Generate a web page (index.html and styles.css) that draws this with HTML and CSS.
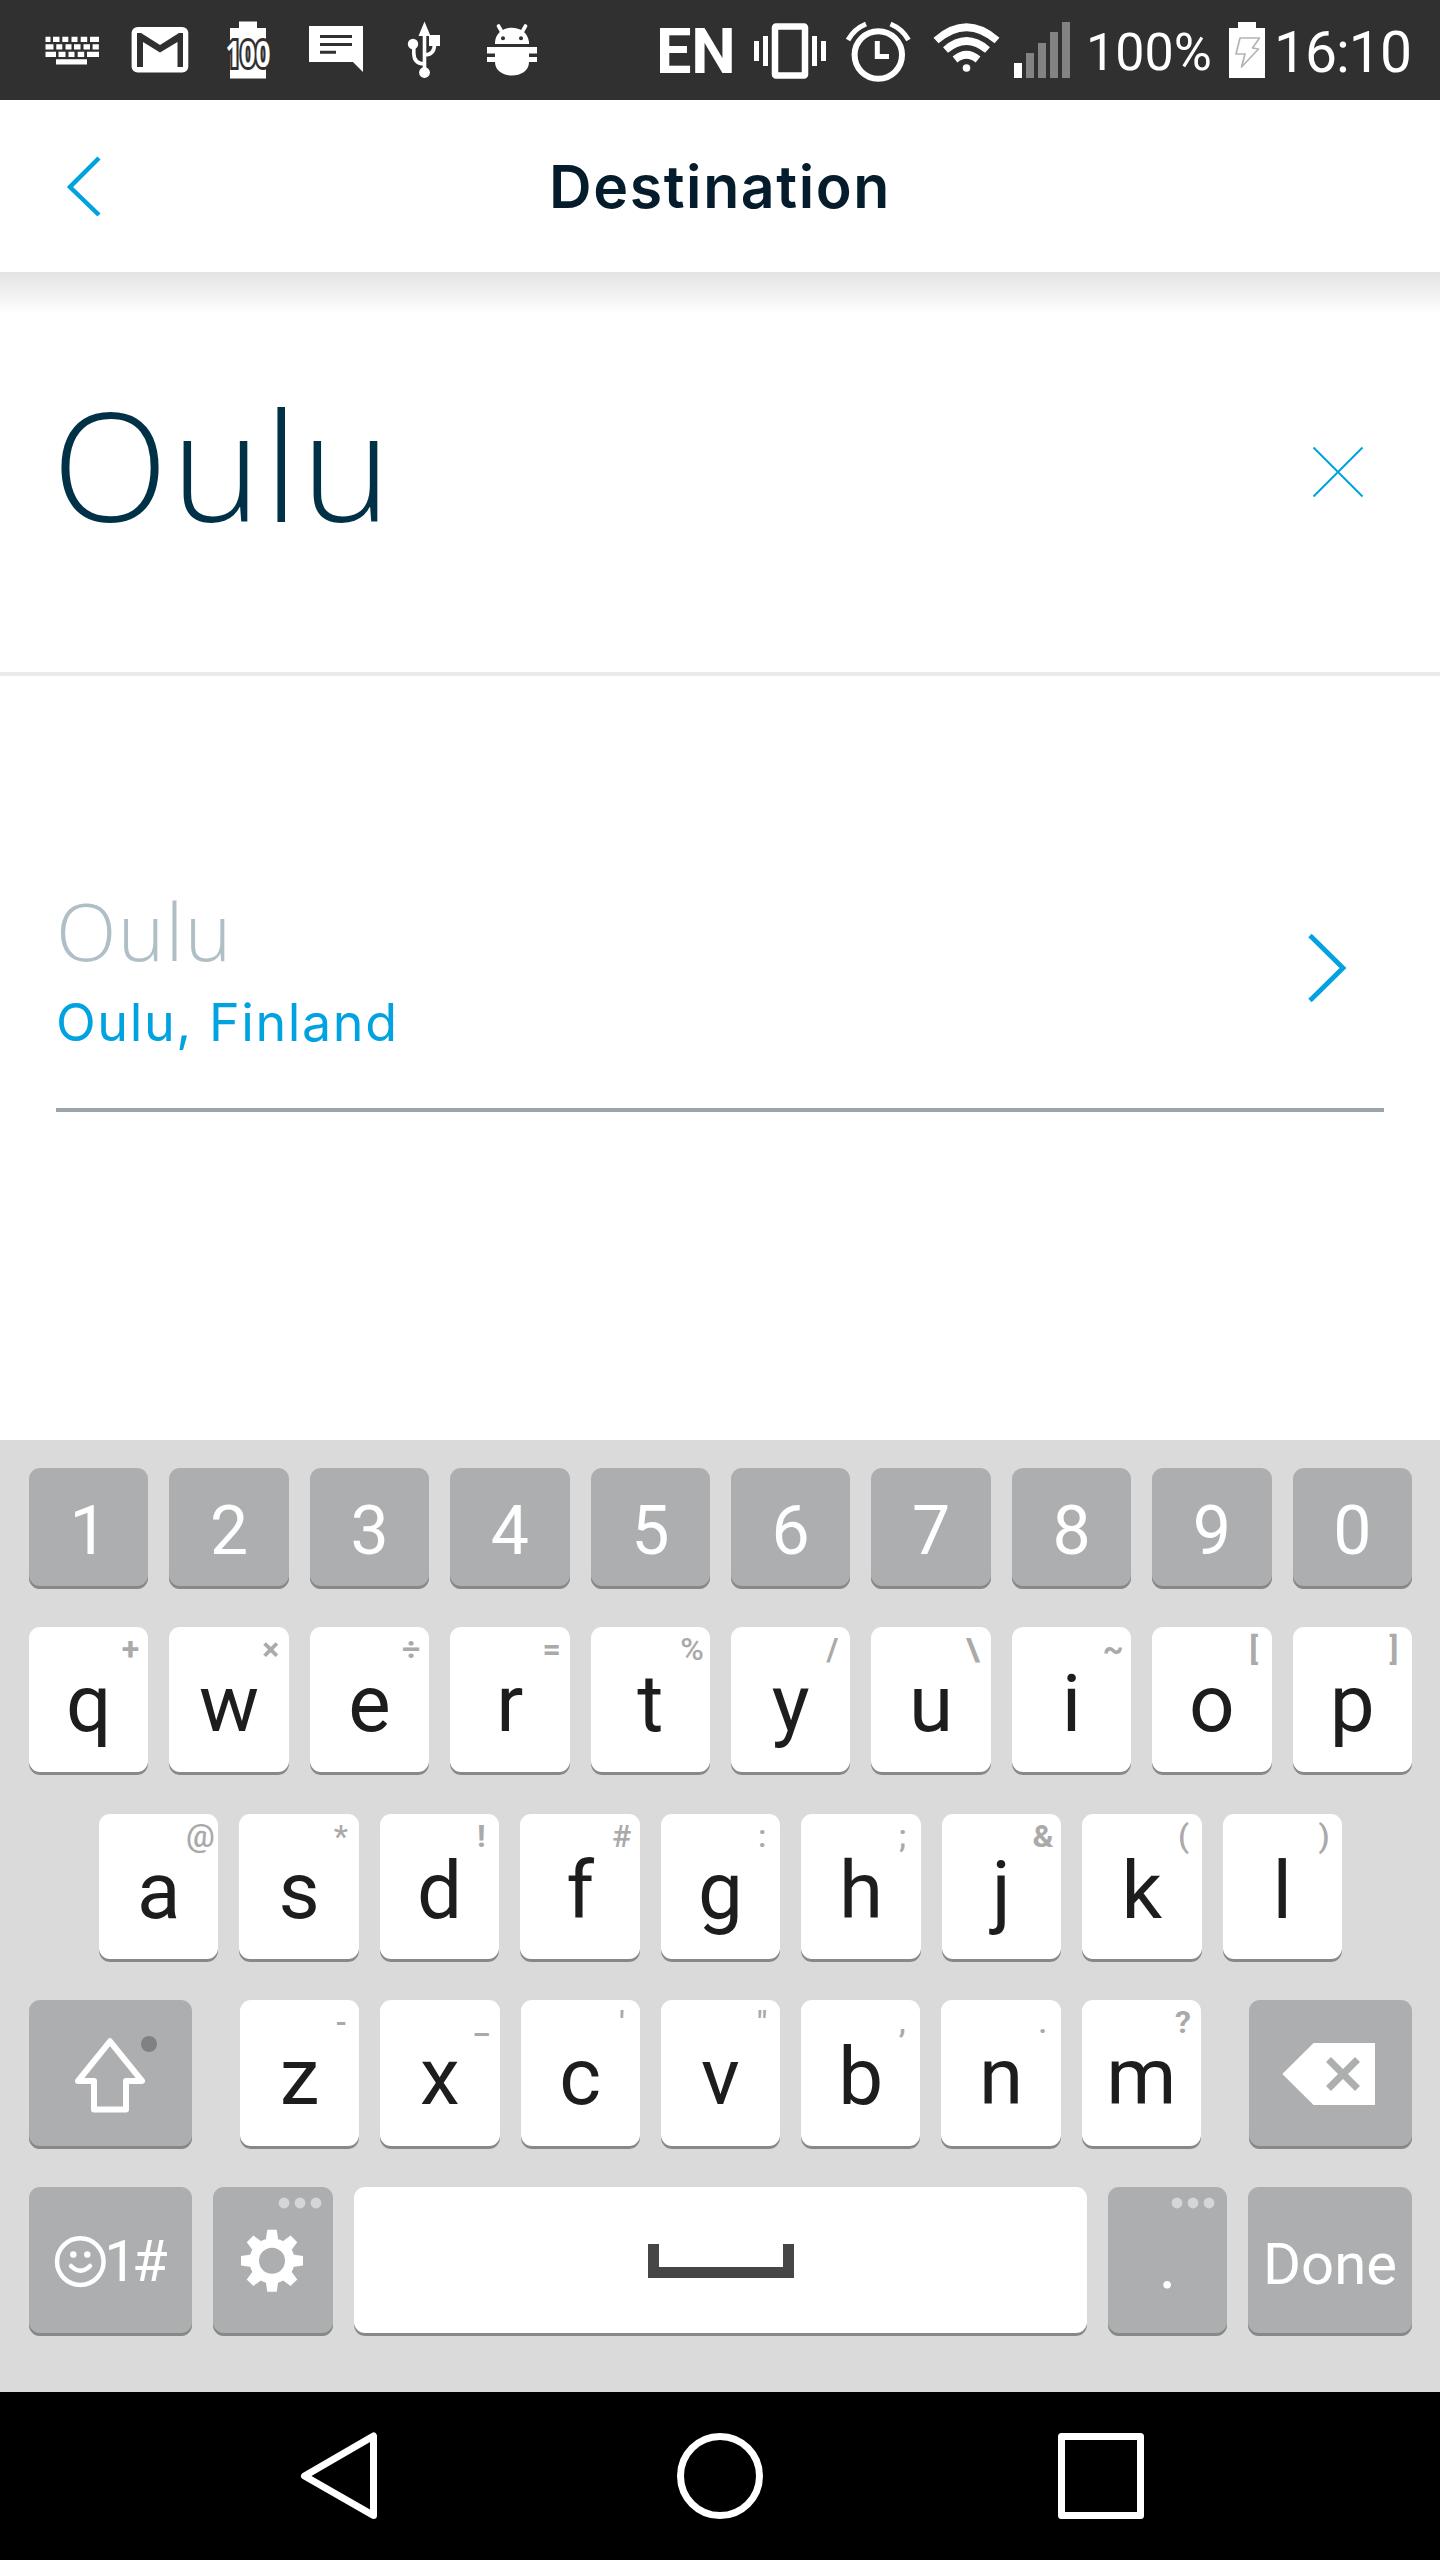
FILE: index.html
```
<!DOCTYPE html>
<html lang="en">
<head>
<meta charset="utf-8">
<title>Destination</title>
<link rel="stylesheet" href="styles.css">
</head>
<body>
<div class="screen">
  <div class="status">
    <div class="status-group status-left">
      <svg width="80" height="100" viewBox="40 0 80 100"><path fill="#fff" d="M45.5 36.7h5v5.2h-5zM53 36.7h6.5v5.2H53zM62.3 36.7h6v5.2h-6zM71.5 36.7h6v5.2h-6zM80.7 36.7h6.5v5.2h-6.5zM90 36.7h9v5.2h-9zM45.5 44.2h8v5.2h-8zM56.3 44.2h6v5.2h-6zM65.5 44.2h6v5.2h-6zM74 44.2h6.5v5.2H74zM83.5 44.2H90v5.2h-6.5zM92.6 44.2h6.2v5.2h-6.2zM45.5 51.8H56V57H45.5zM58.5 51.8h7V57h-7zM68.5 51.8h6V57h-6zM77.7 51.8h6.5V57h-6.5zM87 51.8h12V57H87zM56 59.2h31v5.2H56z"/></svg>
      <svg width="90" height="100" viewBox="120 0 90 100"><rect x="131.6" y="27" width="56.7" height="45.6" rx="6" fill="#fff"/><path fill="#303030" d="M137 33h4l19 12 19-12h4v34h-5.500V42L160 52.500 143 42v25h-6z"/></svg>
      <svg width="90" height="100" viewBox="210 0 90 100"><path fill="#fff" d="M239 21.500h18v6.500h9v50.500h-36V28h9z"/><text class="battery-level" x="248" y="67" text-anchor="middle" textLength="45" lengthAdjust="spacingAndGlyphs">100</text></svg>
      <svg width="90" height="100" viewBox="300 0 90 100"><path fill="#fff" d="M309 26h54v46l-10-10h-44z"/><path stroke="#303030" stroke-width="3" d="M320 36.500h32M320 44.500h32M320 52.200h16"/></svg>
      <svg width="80" height="100" viewBox="390 0 80 100"><g fill="#fff"><path d="m424.500 21.500 6 14.500h-12zM429 35h11v11h-11z"/><circle cx="413" cy="44" r="5.200"/><circle cx="424.500" cy="72.500" r="5.400"/></g><path fill="none" stroke="#fff" stroke-width="3.600" d="M424.500 34v38M413.800 47v6q0 11 10.700 11M434.500 44q0 11-10 11"/></svg>
      <svg width="90" height="100" viewBox="470 0 90 100"><path fill="#fff" d="M495 44v-2c2-19 32-19 34 0v2zM487 47h50v6.500h-8V57h8v5h-8c0 18-34 18-34 0h-8v-5h8v-3.500h-8z"/><path stroke="#fff" stroke-width="3.600" stroke-linecap="round" d="m498.500 26 4 7m23-7-4 7"/><circle cx="503" cy="38.300" r="2" fill="#303030"/><circle cx="521" cy="38.300" r="2" fill="#303030"/></svg>
    </div>
    <div class="status-group">
      <span class="locale">EN</span>
      <svg width="85" height="100" viewBox="750 0 85 100"><path fill="#fff" d="M754 41h5v20h-5zM763 36h5v30h-5zM812 36h5v30h-5zM821 41h5v20h-5z"/><rect x="775" y="26.500" width="30" height="49" rx="1" fill="none" stroke="#fff" stroke-width="6.500"/></svg>
      <svg width="85" height="100" viewBox="835 0 85 100"><g fill="none" stroke="#fff"><circle cx="878.300" cy="55" r="23.700" stroke-width="6"/><path stroke-width="5" d="M877.300 41v15.500H889M848 40q6-11 18-16M908.500 40q-6-11-18-16"/></g></svg>
      <svg width="90" height="100" viewBox="920 0 90 100"><g fill="none" stroke="#fff" stroke-width="7.500"><path d="M936 40.500q30.500-26.500 61 0M945.500 50q21-18 42 0M955 59.500q11.500-9.500 23 0"/></g><circle cx="966.500" cy="68" r="3.800" fill="#fff"/></svg>
      <svg width="70" height="100" viewBox="1010 0 70 100"><path fill="#fff" d="M1014 63h8v15h-8z"/><path fill="#838383" d="M1026 53h8v25h-8zM1038 43h8v35h-8zM1050 32h8v46h-8zM1062 22h8v56h-8z"/></svg>
      <span class="percent">100%</span>
      <svg width="50" height="100" viewBox="1222 0 50 100"><path fill="#fff" d="M1238 22h18v6h9v50h-36V28h9z"/><path fill="none" stroke="#b4b4b4" stroke-width="1.700" stroke-linejoin="round" d="M1240 38h19.500l-7 10 6 1-17 18 3.500-13h-9z"/></svg>
      <span class="clock">16:10</span>
    </div>
  </div>

  <header class="header">
    <svg class="back" width="60" height="80" viewBox="50 148 60 80"><path fill="none" stroke="#00a3e0" stroke-width="4.500" d="m99 159-29 29 29 28"/></svg>
    <h1 class="title">Destination</h1>
  </header>

  <section class="search">
    <span class="query">Oulu</span>
    <svg class="clear" width="60" height="60" viewBox="1308 442 60 60"><path stroke="#00a3e0" stroke-width="2" d="m1313.500 447.500 49 49m0-49-49 49"/></svg>
  </section>

  <main class="results">
    <div class="result">
      <div class="result-text">
        <div class="result-name">Oulu</div>
        <div class="result-place">Oulu, Finland</div>
      </div>
      <svg width="50" height="80" viewBox="1300 928 50 80"><path fill="none" stroke="#00a3e0" stroke-width="4.800" d="m1310 935.500 33 32.500-33 32.500"/></svg>
    </div>
  </main>

  <div class="keyboard">
    <div class="row row-digits">
      <div class="key dark">1</div><div class="key dark">2</div><div class="key dark">3</div><div class="key dark">4</div><div class="key dark">5</div><div class="key dark">6</div><div class="key dark">7</div><div class="key dark">8</div><div class="key dark">9</div><div class="key dark">0</div>
    </div>
    <div class="row">
      <div class="key">q<i class="hint strong">+</i></div><div class="key">w<i class="hint strong">×</i></div><div class="key">e<i class="hint strong">÷</i></div><div class="key">r<i class="hint strong">=</i></div><div class="key">t<i class="hint">%</i></div><div class="key">y<i class="hint strong">/</i></div><div class="key">u<i class="hint strong">\</i></div><div class="key">i<i class="hint strong">~</i></div><div class="key">o<i class="hint strong">[</i></div><div class="key">p<i class="hint strong">]</i></div>
    </div>
    <div class="row row-home">
      <div class="key">a<i class="hint">@</i></div><div class="key">s<i class="hint">*</i></div><div class="key">d<i class="hint strong">!</i></div><div class="key">f<i class="hint">#</i></div><div class="key">g<i class="hint">:</i></div><div class="key">h<i class="hint">;</i></div><div class="key">j<i class="hint strong">&amp;</i></div><div class="key">k<i class="hint">(</i></div><div class="key">l<i class="hint">)</i></div>
    </div>
    <div class="row row-lower">
      <div class="key dark wide"><svg width="163" height="149" viewBox="29 2000 163 149"><path fill="none" stroke="#fff" stroke-width="6" stroke-linejoin="round" d="m110 2041.300 32 39.700h-16v28.500H94V2081H78z"/><circle cx="149" cy="2044" r="8" fill="#808183"/></svg></div>
      <div class="letters">
        <div class="key">z<i class="hint">-</i></div><div class="key">x<i class="hint">_</i></div><div class="key">c<i class="hint">'</i></div><div class="key">v<i class="hint">"</i></div><div class="key">b<i class="hint">,</i></div><div class="key">n<i class="hint">.</i></div><div class="key">m<i class="hint strong">?</i></div>
      </div>
      <div class="key dark wide"><svg width="163" height="149" viewBox="1248 2000 163 149"><path fill="#fff" d="m1281.300 2074 31.300-31h61.400v62h-61.400z"/><path stroke="#adaeb0" stroke-width="7" d="m1327.500 2059.500 29 29m0-29-29 29"/></svg></div>
    </div>
    <div class="row row-bottom">
      <div class="key dark wide symbols"><svg width="53" height="53" viewBox="54 2235 53 53"><g fill="none" stroke="#fff" stroke-width="4.500" stroke-linecap="round"><circle cx="80.300" cy="2261.600" r="23.300"/><path d="M71 2266q9.500 9.500 19 0"/></g><circle cx="73.300" cy="2254.500" r="3.200" fill="#fff"/><circle cx="87.300" cy="2254.500" r="3.200" fill="#fff"/></svg><span>1#</span></div>
      <div class="key dark"><svg width="120" height="149" viewBox="213 2187 120 149"><g fill="#d5d6d8"><circle cx="284" cy="2203" r="5.400"/><circle cx="300" cy="2203" r="5.400"/><circle cx="316" cy="2203" r="5.400"/></g><g transform="translate(272 2260.800)"><g fill="#fff"><path id="tooth" d="M-6.500-19-4.700-31H4.700L6.500-19z"/><use href="#tooth" transform="rotate(45)"/><use href="#tooth" transform="rotate(90)"/><use href="#tooth" transform="rotate(135)"/><use href="#tooth" transform="rotate(180)"/><use href="#tooth" transform="rotate(225)"/><use href="#tooth" transform="rotate(270)"/><use href="#tooth" transform="rotate(315)"/></g><circle r="17.800" fill="none" stroke="#fff" stroke-width="9.600"/></g></svg></div>
      <div class="key"><svg width="146" height="149" viewBox="647 2187 146 149"><path fill="none" stroke="#464646" stroke-width="11" d="M652.500 2244v28.500h135V2244"/></svg></div>
      <div class="key dark period">.<svg class="more" width="50" height="12" viewBox="0 0 50 12"><g fill="#d5d6d8"><circle cx="9" cy="6" r="5.400"/><circle cx="25" cy="6" r="5.400"/><circle cx="41" cy="6" r="5.400"/></g></svg></div>
      <div class="key dark wide done">Done</div>
    </div>
  </div>

  <nav class="nav">
    <svg width="100" height="168" viewBox="290 2392 100 168"><path fill="none" stroke="#fff" stroke-width="7" stroke-linejoin="round" d="M373.500 2436v79.500l-69-39.500z"/></svg>
    <svg width="100" height="168" viewBox="670 2392 100 168"><circle cx="720" cy="2476" r="39.500" fill="none" stroke="#fff" stroke-width="7"/></svg>
    <svg width="100" height="168" viewBox="1050 2392 100 168"><rect x="1061.500" y="2436.500" width="79" height="79" fill="none" stroke="#fff" stroke-width="7" stroke-linejoin="round"/></svg>
  </nav>
</div>
</body>
</html>
```

FILE: styles.css
```
* { box-sizing: border-box; }
body { margin: 0; background: #fff; }
svg { display: block; flex: none; }

.screen {
  width: 1440px;
  height: 2560px;
  display: flex;
  flex-direction: column;
  background: #fff;
  font-family: Roboto, sans-serif;
  overflow: hidden;
}

/* Status bar */
.status {
  flex: none;
  height: 100px;
  display: flex;
  justify-content: space-between;
  padding: 0 28px 0 40px;
  background: #303030;
  color: #fff;
}
.status-group { display: flex; white-space: nowrap; }
.battery-level {
  font: 700 36px "Open Sans", sans-serif;
  fill: #fff;
  stroke: #303030;
  stroke-width: 6px;
  paint-order: stroke;
}
.locale { width: 94px; font-size: 63px; font-weight: 700; line-height: 103px; letter-spacing: -0.3px; }
.percent { width: 142px; padding-left: 6px; font-size: 52px; line-height: 105px; }
.clock { width: 140px; padding-left: 2px; font-size: 57px; line-height: 106px; letter-spacing: -1px; }

/* Header */
.header {
  flex: none;
  height: 172px;
  display: grid;
  grid-template-columns: 110px 1fr 110px;
  align-items: center;
}
.back { margin-left: 50px; }
.title {
  margin: 0;
  text-align: center;
  font: 600 59px/174px Inter, sans-serif;
  letter-spacing: 1.6px;
  color: #051c2c;
}

/* Search field */
.search {
  flex: none;
  height: 404px;
  display: flex;
  justify-content: space-between;
  padding: 0 72px 0 52px;
  border-bottom: 4px solid #eaeaea;
  background: linear-gradient(#e3e3e3, #f0f0f0 20px, #fff 42px);
}
.query { font: 300 152px/384px "Open Sans", sans-serif; letter-spacing: 3px; color: #003146; }
.clear { margin-top: 170px; }

/* Results */
.results { flex: none; height: 764px; padding: 216px 56px 0; }
.result {
  height: 220px;
  display: flex;
  justify-content: space-between;
  padding: 0 34px 0 0;
  border-bottom: 4px solid #9aa4aa;
}
.result svg { margin-top: 36px; }
.result-name { height: 84px; font: 300 79px/78px "Open Sans", sans-serif; letter-spacing: 1.3px; color: #b0bfc6; }
.result-place { font: 400 52px/94px Inter, sans-serif; letter-spacing: 1.6px; color: #00a3e0; }

/* Keyboard */
.keyboard {
  flex: none;
  height: 952px;
  display: flex;
  flex-direction: column;
  gap: 38.2px;
  padding: 28px 28px 0 29px;
  background: #dadada;
}
.row, .letters { display: grid; grid-template-columns: repeat(10, 1fr); grid-template-rows: 100%; column-gap: 21px; }
.row { flex: none; height: 148.6px; }
.row-digits { height: 120.6px; }
.row-home { grid-template-columns: repeat(9, 1fr); padding: 0 70px; }
.row-lower { grid-template-columns: 163px 961px 163px; column-gap: 48px; }
.letters { grid-template-columns: repeat(7, 1fr); }
.row-bottom { grid-template-columns: 163px 120px 733px 119px 164px; }
.key {
  position: relative;
  display: flex;
  justify-content: center;
  border-radius: 11px;
  background: #fff;
  box-shadow: inset 0 -3px #878987;
  color: #1d1d1d;
  font-size: 80px;
  line-height: 155px;
}
.row-digits .key { font-size: 68px; line-height: 126px; }
.dark { background: #adaeb0; color: #fff; }
.hint {
  position: absolute;
  top: 0;
  right: -4px;
  width: 44px;
  text-align: center;
  font-size: 32px;
  font-style: normal;
  font-weight: 500;
  line-height: 44px;
  color: #aaa;
}
.strong { font-weight: 700; }
.symbols { align-items: center; font-size: 58px; padding-right: 4px; }
.symbols span { margin-left: -3px; letter-spacing: -5px; }
.period { font-size: 68px; line-height: 156px; }
.more { position: absolute; top: 10px; right: 9px; }
.done { font-size: 58px; line-height: 154px; }

/* Navigation bar */
.nav {
  flex: none;
  height: 168px;
  display: flex;
  justify-content: space-between;
  padding: 0 290px;
  background: #000;
}
```
